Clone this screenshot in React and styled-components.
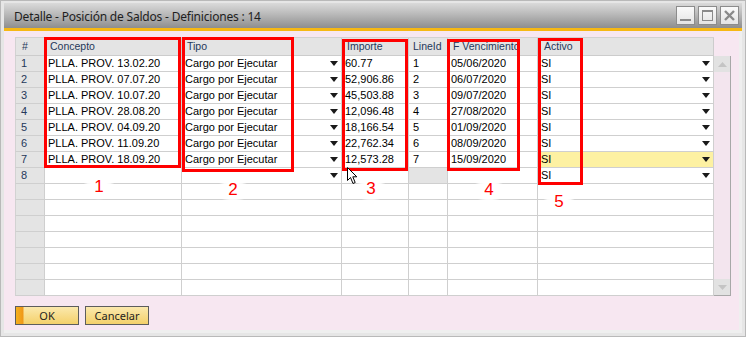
import React from 'react';
import styled, { createGlobalStyle } from 'styled-components';

const GlobalStyle = createGlobalStyle`
  html, body { margin: 0; padding: 0; background: #fff; }
  * { box-sizing: border-box; }
`;

// widths include the right grid line
const COLS = [30, 137, 160, 67, 39, 90, 176];

const rows = [
  ['PLLA. PROV. 13.02.20', '60.77', '05/06/2020'],
  ['PLLA. PROV. 07.07.20', '52,906.86', '06/07/2020'],
  ['PLLA. PROV. 10.07.20', '45,503.88', '09/07/2020'],
  ['PLLA. PROV. 28.08.20', '12,096.48', '27/08/2020'],
  ['PLLA. PROV. 04.09.20', '18,166.54', '01/09/2020'],
  ['PLLA. PROV. 11.09.20', '22,762.34', '08/09/2020'],
  ['PLLA. PROV. 18.09.20', '12,573.28', '15/09/2020'],
];

const boxes = [
  { x: 43, y: 36, w: 137, h: 131 },
  { x: 181, y: 36, w: 112, h: 135 },
  { x: 341, y: 38, w: 66, h: 132 },
  { x: 446, y: 38, w: 73, h: 132 },
  { x: 537, y: 37, w: 45, h: 147 },
];

const marks = [
  { n: 1, x: 98, y: 186 },
  { n: 2, x: 232, y: 189 },
  { n: 3, x: 370, y: 188 },
  { n: 4, x: 488, y: 189 },
  { n: 5, x: 558, y: 201 },
];

export default function App() {
  const empty = Array.from({ length: 7 });
  return (
    <>
      <GlobalStyle />
      <Window>
        <TitleBar>
          <Title>Detalle - Posición de Saldos - Definiciones : 14</Title>
          <Controls>
            <WinBtn>
              <svg width="13" height="13" viewBox="0 0 13 13"><rect x="1" y="10" width="11" height="2" fill="#8a8a8a" /></svg>
            </WinBtn>
            <WinBtn>
              <svg width="13" height="13" viewBox="0 0 13 13"><rect x="1.5" y="1.5" width="10" height="10" fill="none" stroke="#8a8a8a" /><rect x="1" y="1" width="11" height="2" fill="#8a8a8a" /></svg>
            </WinBtn>
            <WinBtn>
              <svg width="13" height="13" viewBox="0 0 13 13"><path d="M2 2 L11 11 M11 2 L2 11" stroke="#8a8a8a" strokeWidth="2.4" /></svg>
            </WinBtn>
          </Controls>
        </TitleBar>
        <Body>
          <Grid>
            <HeaderRow>
              <HeadCell $w={COLS[0]}>#</HeadCell>
              <HeadCell $w={COLS[1]}>Concepto</HeadCell>
              <HeadCell $w={COLS[2]}>Tipo</HeadCell>
              <HeadCell $w={COLS[3]}>Importe</HeadCell>
              <HeadCell $w={COLS[4]} $pad={4}>LineId</HeadCell>
              <HeadCell $w={COLS[5]}>F Vencimiento</HeadCell>
              <HeadCell $w={COLS[6]} $pad={6}>Activo</HeadCell>
            </HeaderRow>
            <GridBody>
              <Rows>
                {rows.map((r, i) => (
                  <Row key={i}>
                    <NumCell $w={COLS[0]}>{i + 1}</NumCell>
                    <Cell $w={COLS[1]}>{r[0]}</Cell>
                    <Cell $w={COLS[2]}>Cargo por Ejecutar<Arrow /></Cell>
                    <Cell $w={COLS[3]}>{r[1]}</Cell>
                    <Cell $w={COLS[4]} $pad={4}>{i + 1}</Cell>
                    <Cell $w={COLS[5]}>{r[2]}</Cell>
                    <Cell $w={COLS[6]} $hl={i === 6}>SI<Arrow /></Cell>
                  </Row>
                ))}
                <Row>
                  <NumCell $w={COLS[0]}>8</NumCell>
                  <Cell $w={COLS[1]} />
                  <Cell $w={COLS[2]}><Arrow /></Cell>
                  <Cell $w={COLS[3]} />
                  <NumCell $w={COLS[4]} />
                  <Cell $w={COLS[5]} />
                  <Cell $w={COLS[6]}>SI<Arrow /></Cell>
                </Row>
                {empty.map((_, i) => (
                  <Row key={'e' + i}>
                    <NumCell $w={COLS[0]} />
                    {COLS.slice(1).map((w, j) => <Cell key={j} $w={w} />)}
                  </Row>
                ))}
              </Rows>
              <Scrollbar>
                <ScrollBtn>
                  <svg width="9" height="5" viewBox="0 0 9 5"><path d="M0 5 L4.5 0 L9 5 Z" fill="#c4c4c4" /></svg>
                </ScrollBtn>
                <ScrollBtn>
                  <svg width="9" height="5" viewBox="0 0 9 5"><path d="M0 0 L4.5 5 L9 0 Z" fill="#c4c4c4" /></svg>
                </ScrollBtn>
              </Scrollbar>
            </GridBody>
          </Grid>
          <Buttons>
            <Button $primary>OK</Button>
            <Button>Cancelar</Button>
          </Buttons>
        </Body>

        {boxes.map((b, i) => (
          <RedBox key={i} style={{ left: b.x, top: b.y, width: b.w, height: b.h }} />
        ))}
        {marks.map((m) => (
          <Mark key={m.n} style={{ left: m.x - 16, top: m.y - 13 }}>{m.n}</Mark>
        ))}
        <Cursor width="12" height="18" viewBox="0 0 12 18">
          <path d="M0.5 0.5 L0.5 13.5 L3.5 10.5 L6 16.5 L8.2 15.5 L5.8 9.8 L9.8 9.8 Z" fill="#fff" stroke="#000" strokeWidth="1" />
        </Cursor>
      </Window>
    </>
  );
}

function Arrow() {
  return (
    <ArrowIcon width="8" height="5" viewBox="0 0 8 5">
      <path d="M0 0 L8 0 L4 5 Z" fill="#1a1a1a" />
    </ArrowIcon>
  );
}

const Window = styled.div`
  position: relative;
  width: 746px;
  height: 337px;
  padding: 2px 3px 3px 3px;
  background: #e6e6e6;
  border: 1px solid #b9b9b9;
  display: flex;
  flex-direction: column;
  font-family: "Liberation Sans", Arial, sans-serif;
  overflow: hidden;
`;

const TitleBar = styled.div`
  height: 28px;
  flex: none;
  display: flex;
  align-items: center;
  justify-content: space-between;
  padding: 0 3px 0 10px;
  background: linear-gradient(#dadada, #bdbdbd 40%, #8e8e8e);
  border-bottom: 3px solid #f6b814;
`;

const Title = styled.div`
  font-family: "Noto Sans", "Open Sans", sans-serif;
  font-size: 12px;
  color: #1e1e1e;
  padding-top: 2px;
  letter-spacing: -0.2px;
`;

const Controls = styled.div`
  display: flex;
  gap: 3px;
  align-self: flex-start;
  margin-top: 3px;
`;

const WinBtn = styled.div`
  width: 19px;
  height: 19px;
  border: 1px solid #8c8c8c;
  background: linear-gradient(#fafafa, #e4e4e4);
  display: flex;
  align-items: center;
  justify-content: center;
`;

const Body = styled.div`
  flex: 1;
  background: #f7e7f1;
  padding: 6px 0 0 11px;
  border-right: 3px solid #efefef;
  border-bottom: 3px solid #efefef;
`;

const Grid = styled.div`
  display: flex;
  flex-direction: column;
  width: 716px;
`;

const HeaderRow = styled.div`
  display: flex;
  width: 699px;
  height: 19px;
  background: #e4e4e4;
  border-top: 1px solid #d2d2d2;
`;

const HeadCell = styled.div`
  width: ${(p) => p.$w}px;
  flex: none;
  padding-left: ${(p) => p.$pad ?? 5}px;
  border-right: 1px solid #cccccc;
  border-bottom: 1px solid #cccccc;
  font-size: 10.5px;
  line-height: 17px;
  color: #25385a;
  white-space: nowrap;
  overflow: hidden;
  &:first-child { padding-left: 6px; border-left: 1px solid #d2d2d2; }
`;

const GridBody = styled.div`
  display: flex;
`;

const Rows = styled.div`
  width: 699px;
  display: flex;
  flex-direction: column;
`;

const Row = styled.div`
  display: flex;
  height: 16px;
`;

const Cell = styled.div`
  position: relative;
  width: ${(p) => p.$w}px;
  flex: none;
  padding-left: ${(p) => p.$pad ?? 3}px;
  background: ${(p) => (p.$hl ? '#fdf1a2' : '#ffffff')};
  border-right: 1px solid #cfcfcf;
  border-bottom: 1px solid #cfcfcf;
  font-size: 11px;
  line-height: 15px;
  color: #000;
  white-space: nowrap;
`;

const NumCell = styled(Cell)`
  background: #e4e4e4;
  padding-left: ${(p) => (p.$w > 30 ? 4 : 5)}px;
  border-left: ${(p) => (p.$w > 30 ? 0 : 1)}px solid #d2d2d2;
  color: #25385a;
`;

const ArrowIcon = styled.svg`
  position: absolute;
  right: 3px;
  top: 5px;
`;

const Scrollbar = styled.div`
  width: 17px;
  display: flex;
  flex-direction: column;
  justify-content: space-between;
  background: #f3e5ee;
  border-right: 1px solid #a8a8a8;
  border-bottom: 1px solid #a8a8a8;
`;

const ScrollBtn = styled.div`
  width: 16px;
  height: 16px;
  background: #e2e2e2;
  display: flex;
  align-items: center;
  justify-content: center;
`;

const Buttons = styled.div`
  display: flex;
  gap: 6px;
  margin-top: 10px;
`;

const Button = styled.div`
  width: 64px;
  height: 19px;
  border: 1px solid #5d5d5d;
  background: ${(p) =>
    p.$primary
      ? 'linear-gradient(90deg, #f6b11f, #ef9718 7px, transparent 8px), linear-gradient(#fbe9ad, #f4d06a)'
      : 'linear-gradient(#fbe9ad, #f4d06a)'};
  font-family: "Noto Sans", "Open Sans", sans-serif;
  font-size: 11px;
  line-height: 17px;
  text-align: center;
  color: #1e1e1e;
`;

const RedBox = styled.div`
  position: absolute;
  border: 3px solid #ff0000;
  pointer-events: none;
`;

const Mark = styled.div`
  position: absolute;
  width: 32px;
  height: 26px;
  text-align: center;
  font-family: "Liberation Sans", Arial, sans-serif;
  font-size: 17px;
  line-height: 26px;
  color: #ff0000;
  background: radial-gradient(closest-side, #fff 55%, rgba(255, 255, 255, 0.85) 75%, rgba(255, 255, 255, 0));
`;

const Cursor = styled.svg`
  position: absolute;
  left: 346px;
  top: 166px;
`;
